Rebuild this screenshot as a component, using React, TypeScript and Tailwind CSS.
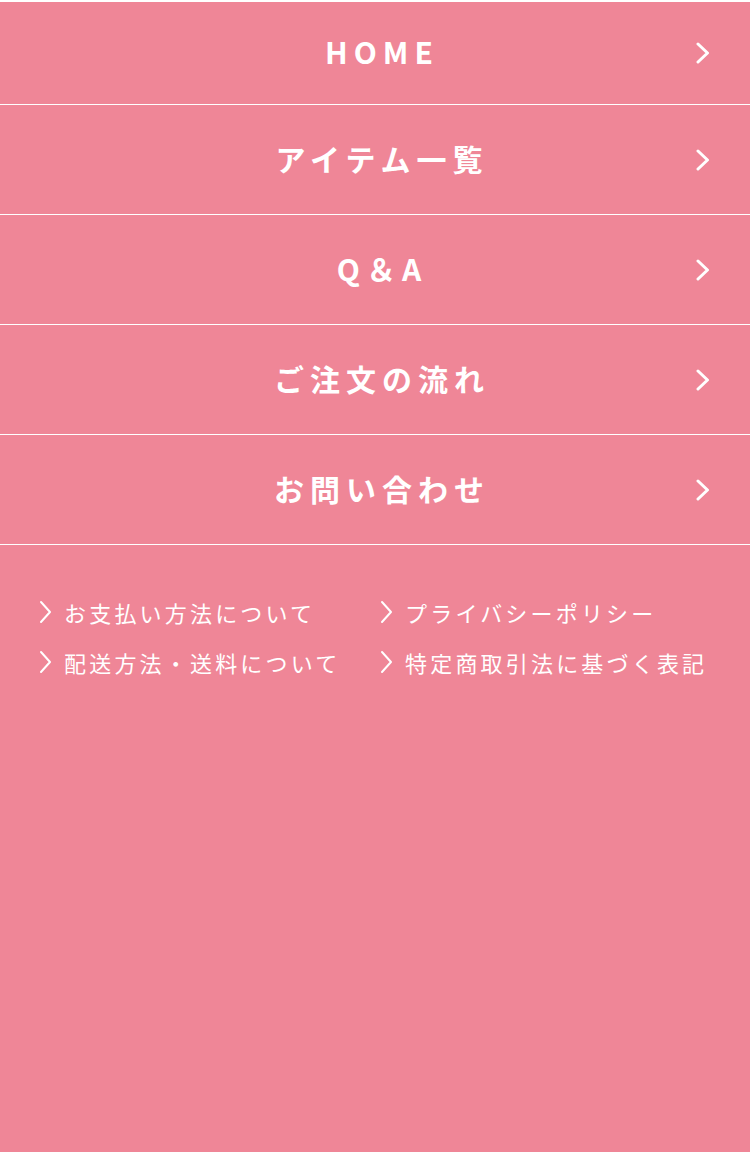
import type { ReactNode } from "react";

const menu = ["HOME", "アイテム一覧", "Q＆A", "ご注文の流れ", "お問い合わせ"];

const links = [
  ["お支払い方法について", "プライバシーポリシー"],
  ["配送方法・送料について", "特定商取引法に基づく表記"],
];

const Chevron = ({ className }: { className: string }) => (
  <svg className={className} viewBox="0 0 14 22" fill="none">
    <polyline points="2,2 11.5,11 2,20" stroke="white" strokeWidth="3" strokeLinecap="round" strokeLinejoin="round" />
  </svg>
);

const SmallChevron = () => (
  <svg className="w-[14px] h-[24px] shrink-0" viewBox="0 0 14 24" fill="none">
    <polyline points="2,2 11,12 2,22" stroke="white" strokeWidth="2" strokeLinecap="round" strokeLinejoin="round" />
  </svg>
);

const MenuRow = ({ children, first }: { children: ReactNode; first?: boolean }) => (
  <a
    href="#"
    className={`relative flex items-center justify-center border-b border-white ${first ? "h-[103px]" : "h-[110px]"}`}
  >
    <span className="pl-[14px] pb-[4px] text-[30px] font-bold tracking-[0.2em] text-white leading-none">{children}</span>
    <Chevron className="absolute right-[40px] top-1/2 -translate-y-1/2 w-[14px] h-[22px]" />
  </a>
);

export default function App() {
  return (
    <div
      className="min-h-[1152px] bg-[#ef8697] border-t-2 border-white"
      style={{ fontFamily: '"Noto Sans CJK JP", "Noto Sans", sans-serif' }}
    >
      <nav className="flex flex-col">
        {menu.map((m, i) => (
          <MenuRow key={m} first={i === 0}>
            {m}
          </MenuRow>
        ))}
      </nav>

      <div className="pt-[51px] pl-[39px] flex flex-col gap-[18px]">
        {links.map((row, i) => (
          <div key={i} className="grid grid-cols-[341px_1fr]">
            {row.map((l) => (
              <a key={l} href="#" className="flex items-center gap-[11px] text-white text-[22px] tracking-[0.145em] leading-[32px]">
                <SmallChevron />
                {l}
              </a>
            ))}
          </div>
        ))}
      </div>
    </div>
  );
}
